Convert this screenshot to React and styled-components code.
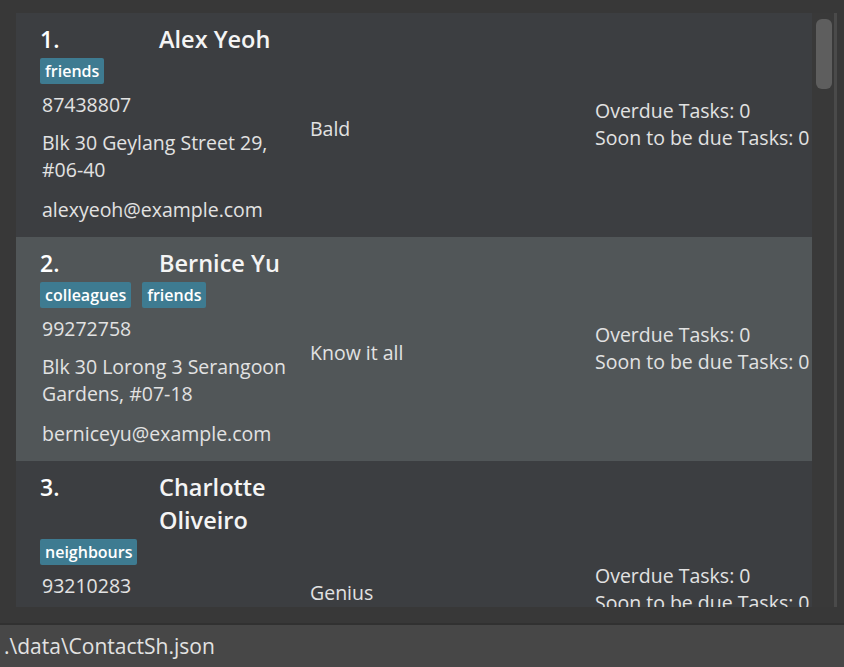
import React from "react";
import styled, { createGlobalStyle } from "styled-components";

const GlobalStyle = createGlobalStyle`
  html, body {
    margin: 0;
    padding: 0;
    background: #383838;
  }
  * {
    box-sizing: border-box;
  }
`;

const StPage = styled.div`
  width: 844px;
  height: 667px;
  display: flex;
  flex-direction: column;
  background: #383838;
  font-family: "Open Sans", "Noto Sans", sans-serif;
  overflow: hidden;
`;

const StListArea = styled.div`
  height: 623px;
  padding: 13px 7px 16px 16px;
  display: flex;
`;

const StCards = styled.div`
  flex: 1;
  overflow: hidden;
  display: flex;
  flex-direction: column;
`;

const StScrollTrack = styled.div`
  width: 25px;
  background: #393939;
  border-right: 3px solid #4a4a4a;
  padding: 6px 2px 0 4px;
`;

const StThumb = styled.div`
  width: 16px;
  height: 70px;
  border-radius: 6px;
  background: #5e5e5e;
`;

const StCard = styled.div`
  flex-shrink: 0;
  display: grid;
  grid-template-columns: 270px 285px 1fr;
  padding: 10px 0 14px 24px;
  background: ${(p) => (p.$odd ? "#515658" : "#3c3e41")};
`;

const StLeft = styled.div`
  display: flex;
  flex-direction: column;
`;

const StHeader = styled.div`
  display: flex;
  align-items: flex-start;
`;

const StIndex = styled.div`
  width: 119px;
  flex-shrink: 0;
  font-size: 23px;
  font-weight: 600;
  line-height: 33px;
  color: #ffffff;
`;

const StName = styled.div`
  flex: 1;
  font-size: 23.5px;
  font-weight: 600;
  line-height: 33px;
  color: #f4f4f4;
`;

const StTags = styled.div`
  display: flex;
  gap: 11px;
  margin-top: 2px;
`;

const StTag = styled.span`
  height: 26px;
  padding: 0 5px;
  border-radius: 2px;
  background: #3e7b91;
  color: #ffffff;
  font-size: 16px;
  font-weight: 600;
  line-height: 26px;
`;

const StField = styled.div`
  max-width: 258px;
  margin-top: ${(p) => p.$gap}px;
  padding-left: 2px;
  font-size: 19.5px;
  line-height: 27px;
  color: #e2e2e2;
`;

const StMiddle = styled.div`
  align-self: center;
  padding-top: 10px;
  font-size: 19.5px;
  line-height: 27px;
  color: #e2e2e2;
`;

const StTasks = styled.div`
  align-self: center;
  padding-top: 2px;
  font-size: 19.5px;
  line-height: 27px;
  color: #e2e2e2;
  white-space: nowrap;
`;

const StStatusBar = styled.div`
  flex: 1;
  border-top: 2px solid #313131;
  background: #474747;
  padding: 0 0 0 4px;
  display: flex;
  align-items: center;
  font-size: 21px;
  color: #e2e2e2;
`;

const persons = [
  {
    name: "Alex Yeoh",
    tags: ["friends"],
    phone: "87438807",
    address: "Blk 30 Geylang Street 29, #06-40",
    email: "alexyeoh@example.com",
    remark: "Bald",
  },
  {
    name: "Bernice Yu",
    tags: ["colleagues", "friends"],
    phone: "99272758",
    address: "Blk 30 Lorong 3 Serangoon Gardens, #07-18",
    email: "berniceyu@example.com",
    remark: "Know it all",
  },
  {
    name: "Charlotte Oliveiro",
    tags: ["neighbours"],
    phone: "93210283",
    address: "Blk 11 Ang Mo Kio Street 74, #11-04",
    email: "charlotte@example.com",
    remark: "Genius",
  },
];

const PersonCard = ({ person, index }) => {
  return (
    <StCard $odd={index % 2 === 1}>
      <StLeft>
        <StHeader>
          <StIndex>{index + 1}.</StIndex>
          <StName>{person.name}</StName>
        </StHeader>
        <StTags>
          {person.tags.map((tag) => (
            <StTag key={tag}>{tag}</StTag>
          ))}
        </StTags>
        <StField $gap={7}>{person.phone}</StField>
        <StField $gap={11}>{person.address}</StField>
        <StField $gap={13}>{person.email}</StField>
      </StLeft>
      <StMiddle>{person.remark}</StMiddle>
      <StTasks>
        <div>Overdue Tasks: 0</div>
        <div>Soon to be due Tasks: 0</div>
      </StTasks>
    </StCard>
  );
};

export default function App() {
  return (
    <StPage>
      <GlobalStyle />
      <StListArea>
        <StCards>
          {persons.map((person, i) => (
            <PersonCard key={person.name} person={person} index={i} />
          ))}
        </StCards>
        <StScrollTrack>
          <StThumb />
        </StScrollTrack>
      </StListArea>
      <StStatusBar>.\data\ContactSh.json</StStatusBar>
    </StPage>
  );
}
